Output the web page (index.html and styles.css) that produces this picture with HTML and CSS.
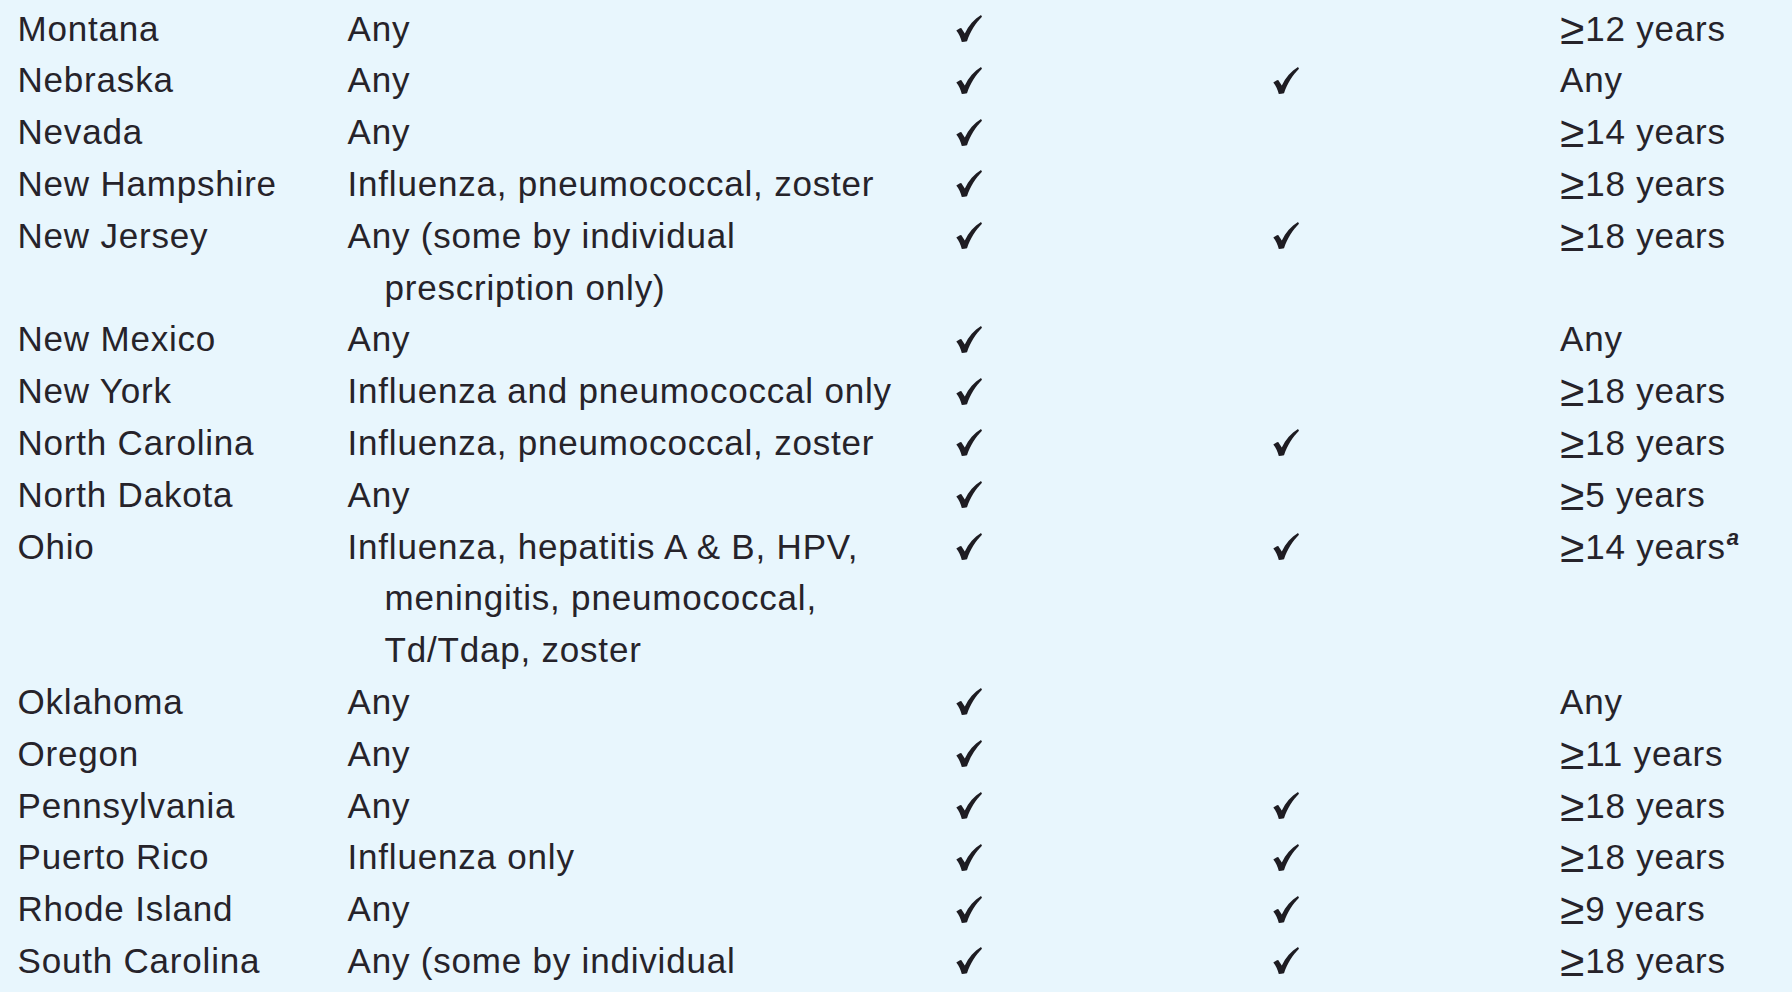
FILE: index.html
```html
<!DOCTYPE html>
<html lang="en">
<head>
<meta charset="utf-8">
<title>Vaccination authority by state</title>
<link rel="stylesheet" href="styles.css">
</head>
<body>
<svg width="0" height="0" class="defs" aria-hidden="true">
  <defs>
    <symbol id="chk" viewBox="0 0 26 27">
      <path d="M0.3 15.6 C1.8 14.2 3.6 13.3 5.2 13 L8.8 18.6 C12.6 10.6 18.2 4.4 25 0.1 L26 1.7 C19.8 8 14.4 16 11 26.3 C9.4 26.8 7.6 27 5.8 27 C4.6 22.8 2.9 18.8 0.3 15.6 Z"/>
    </symbol>
  </defs>
</svg>
<main class="table">
  <div class="row"><div class="state">Montana</div><div class="vac">Any</div><div class="c1"><svg class="check"><use href="#chk"/></svg></div><div class="c2"></div><div class="age"><span class="ge">≥</span>12 years</div></div>
  <div class="row"><div class="state">Nebraska</div><div class="vac">Any</div><div class="c1"><svg class="check"><use href="#chk"/></svg></div><div class="c2"><svg class="check"><use href="#chk"/></svg></div><div class="age">Any</div></div>
  <div class="row"><div class="state">Nevada</div><div class="vac">Any</div><div class="c1"><svg class="check"><use href="#chk"/></svg></div><div class="c2"></div><div class="age"><span class="ge">≥</span>14 years</div></div>
  <div class="row"><div class="state">New Hampshire</div><div class="vac">Influenza, pneumococcal, zoster</div><div class="c1"><svg class="check"><use href="#chk"/></svg></div><div class="c2"></div><div class="age"><span class="ge">≥</span>18 years</div></div>
  <div class="row"><div class="state">New Jersey</div><div class="vac">Any (some by individual<br>prescription only)</div><div class="c1"><svg class="check"><use href="#chk"/></svg></div><div class="c2"><svg class="check"><use href="#chk"/></svg></div><div class="age"><span class="ge">≥</span>18 years</div></div>
  <div class="row"><div class="state">New Mexico</div><div class="vac">Any</div><div class="c1"><svg class="check"><use href="#chk"/></svg></div><div class="c2"></div><div class="age">Any</div></div>
  <div class="row"><div class="state">New York</div><div class="vac">Influenza and pneumococcal only</div><div class="c1"><svg class="check"><use href="#chk"/></svg></div><div class="c2"></div><div class="age"><span class="ge">≥</span>18 years</div></div>
  <div class="row"><div class="state">North Carolina</div><div class="vac">Influenza, pneumococcal, zoster</div><div class="c1"><svg class="check"><use href="#chk"/></svg></div><div class="c2"><svg class="check"><use href="#chk"/></svg></div><div class="age"><span class="ge">≥</span>18 years</div></div>
  <div class="row"><div class="state">North Dakota</div><div class="vac">Any</div><div class="c1"><svg class="check"><use href="#chk"/></svg></div><div class="c2"></div><div class="age"><span class="ge">≥</span>5 years</div></div>
  <div class="row"><div class="state">Ohio</div><div class="vac">Influenza, hepatitis A &amp; B, HPV,<br>meningitis, pneumococcal,<br>Td/Tdap, zoster</div><div class="c1"><svg class="check"><use href="#chk"/></svg></div><div class="c2"><svg class="check"><use href="#chk"/></svg></div><div class="age"><span class="ge">≥</span>14 years<sup class="fn">a</sup></div></div>
  <div class="row"><div class="state">Oklahoma</div><div class="vac">Any</div><div class="c1"><svg class="check"><use href="#chk"/></svg></div><div class="c2"></div><div class="age">Any</div></div>
  <div class="row"><div class="state">Oregon</div><div class="vac">Any</div><div class="c1"><svg class="check"><use href="#chk"/></svg></div><div class="c2"></div><div class="age"><span class="ge">≥</span>11 years</div></div>
  <div class="row"><div class="state">Pennsylvania</div><div class="vac">Any</div><div class="c1"><svg class="check"><use href="#chk"/></svg></div><div class="c2"><svg class="check"><use href="#chk"/></svg></div><div class="age"><span class="ge">≥</span>18 years</div></div>
  <div class="row"><div class="state">Puerto Rico</div><div class="vac">Influenza only</div><div class="c1"><svg class="check"><use href="#chk"/></svg></div><div class="c2"><svg class="check"><use href="#chk"/></svg></div><div class="age"><span class="ge">≥</span>18 years</div></div>
  <div class="row"><div class="state">Rhode Island</div><div class="vac">Any</div><div class="c1"><svg class="check"><use href="#chk"/></svg></div><div class="c2"><svg class="check"><use href="#chk"/></svg></div><div class="age"><span class="ge">≥</span>9 years</div></div>
  <div class="row"><div class="state">South Carolina</div><div class="vac">Any (some by individual<br>prescription only)</div><div class="c1"><svg class="check"><use href="#chk"/></svg></div><div class="c2"><svg class="check"><use href="#chk"/></svg></div><div class="age"><span class="ge">≥</span>18 years</div></div>
</main>
</body>
</html>
```
FILE: styles.css
```css
html, body {
  margin: 0;
  padding: 0;
  background: #e8f6fd;
}
body {
  height: 992px;
  overflow: hidden;
  font-family: "Liberation Sans", Arial, sans-serif;
  font-size: 35px;
  line-height: 51.8px;
  color: #26232a;
  letter-spacing: 0.8px;
}
.defs {
  position: absolute;
  width: 0;
  height: 0;
}
.table {
  display: flex;
  flex-direction: column;
  padding: 2.6px 0 0 17.5px;
}
.row {
  display: grid;
  grid-template-columns: 330px 608.5px 317px 287px 1fr;
}
.vac {
  padding-left: 37px;
  text-indent: -37px;
  white-space: nowrap;
}
.c1, .c2 {
  padding-top: 12.4px;
}
.check {
  display: block;
  width: 26px;
  height: 27px;
  fill: #1e1c22;
}
.age {
  white-space: nowrap;
}
.ge {
  font-size: 44px;
  font-weight: 300;
  line-height: 0;
  vertical-align: -3px;
  letter-spacing: 0;
  margin-right: 1px;
}
.fn {
  font-size: 22px;
  font-weight: bold;
  font-style: italic;
  line-height: 0;
  vertical-align: 14px;
  margin-left: 1px;
  letter-spacing: 0;
}
```
